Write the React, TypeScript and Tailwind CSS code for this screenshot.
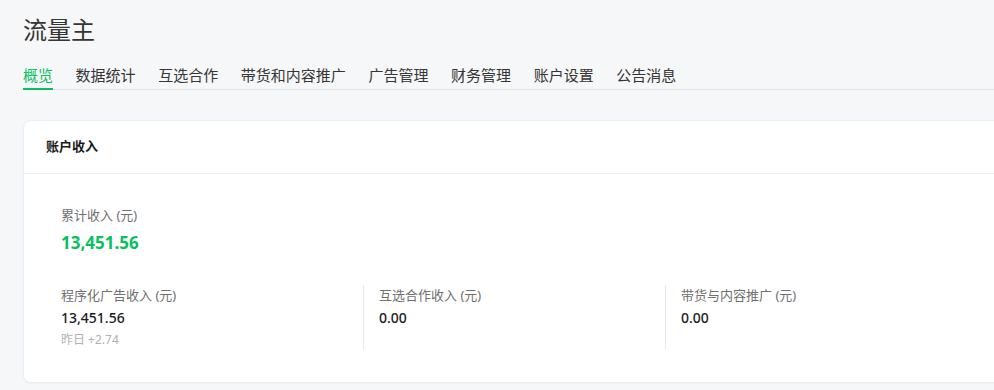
import React from "react";

const tabs = ["概览", "数据统计", "互选合作", "带货和内容推广", "广告管理", "财务管理", "账户设置", "公告消息"];

const cols = [
  { label: "程序化广告收入 (元)", value: "13,451.56", sub: "昨日 +2.74" },
  { label: "互选合作收入 (元)", value: "0.00" },
  { label: "带货与内容推广 (元)", value: "0.00" },
];

export default function App() {
  return (
    <div
      className="w-full min-h-screen overflow-hidden bg-[#f6f7f9] text-[#353535]"
      style={{ fontFamily: "'Noto Sans', 'Noto Sans CJK SC', sans-serif" }}
    >
      <div className="pl-[23px] pt-[14px]">
        <h1 className="text-[24px] leading-[32px] font-normal text-[#353535]">流量主</h1>
        <div className="mt-[18px] flex gap-[22.6px] border-b border-[#e1e2e5]">
          {tabs.map((t, i) => (
            <div
              key={t}
              className={
                "-mb-px pb-[2px] text-[15px] leading-[22px] border-b-2 " +
                (i === 0 ? "border-[#07c160] text-[#07c160]" : "border-transparent text-[#353535]")
              }
            >
              {t}
            </div>
          ))}
        </div>
      </div>
      <div className="ml-[23px] mt-[30px] w-[1010px] rounded-lg border border-[#eceef1] bg-white shadow-[0_1px_2px_rgba(0,0,0,0.03)]">
        <div className="flex h-[53px] items-center border-b border-[#eeeff1] px-[22px] text-[13px] font-bold text-[#1a1a1a]">
          账户收入
        </div>
        <div className="pl-[37px] pt-[31px] pb-[33px]">
          <div className="text-[13px] leading-[20px] text-[#6f6f6f]">累计收入 (元)</div>
          <div className="mt-[5px] text-[17px] leading-[26px] font-bold text-[#07c160]">13,451.56</div>
          <div className="mt-[29px] flex">
            {cols.map((c, i) => (
              <div
                key={c.label}
                className={
                  "h-[64px] w-[302px] " + (i > 0 ? "border-l border-[#e8e9eb] pl-[15px]" : "")
                }
              >
                <div className="text-[13px] leading-[20px] text-[#6f6f6f]">{c.label}</div>
                <div className="mt-[2px] text-[14px] leading-[22px] font-medium text-[#1a1a1a]">{c.value}</div>
                {c.sub && <div className="mt-[1px] text-[12px] leading-[20px] text-[#b2b2b2]">{c.sub}</div>}
              </div>
            ))}
          </div>
        </div>
      </div>
    </div>
  );
}
